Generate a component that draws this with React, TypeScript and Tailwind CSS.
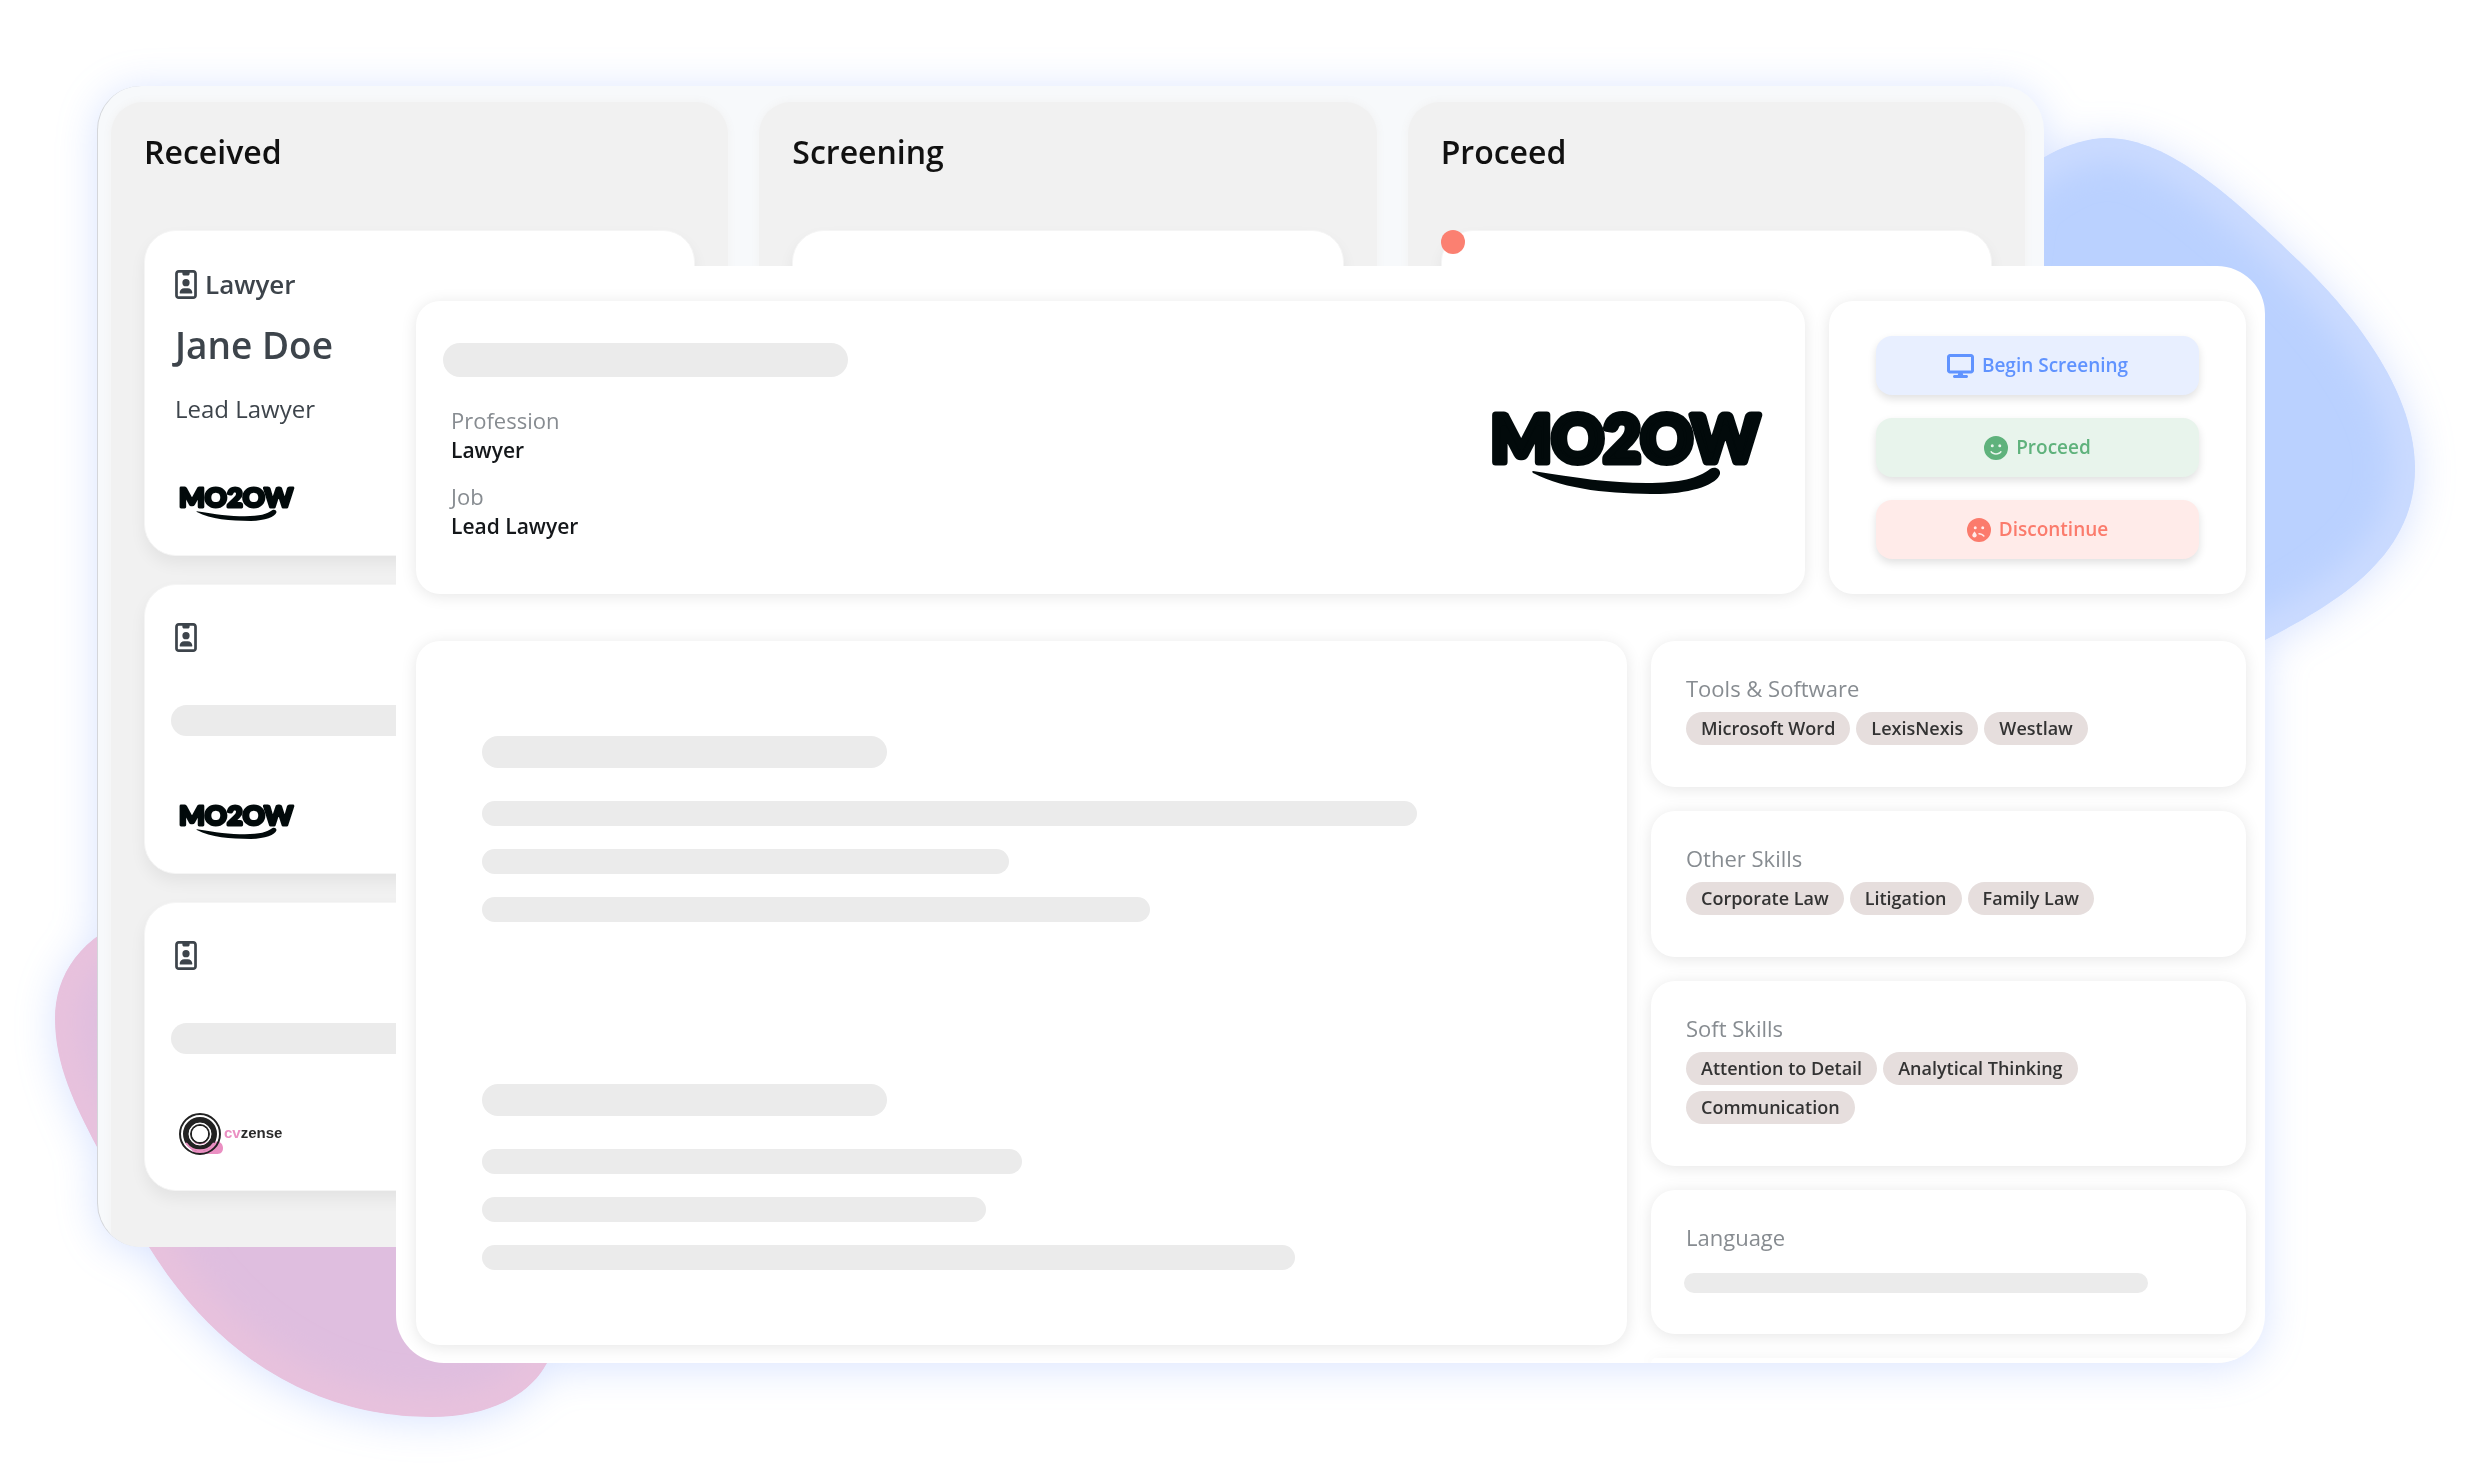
import React from "react";
import { FaDisplay, FaFaceSadTear, FaFaceSmile, FaRegIdBadge } from "react-icons/fa6";

interface SkillGroup {
  title: string;
  skills: string[];
}

const skillGroups: SkillGroup[] = [
  { title: "Tools & Software", skills: ["Microsoft Word", "LexisNexis", "Westlaw"] },
  { title: "Other Skills", skills: ["Corporate Law", "Litigation", "Family Law"] },
  { title: "Soft Skills", skills: ["Attention to Detail", "Analytical Thinking", "Communication"] },
];

const BLUE_BLOB =
  "M2000 190 C2030 162 2070 138 2107 138 C2170 138 2235 200 2300 262 C2360 320 2415 395 2415 469 C2415 560 2330 606 2265 640 L2100 700 L1960 500 Z";
const PINK_BLOB =
  "M140 915 C80 935 55 975 55 1019 C55 1065 75 1105 97 1147 C115 1184 130 1215 149 1247 C230 1378 340 1417 431 1417 C490 1417 530 1395 547 1363 L640 1200 L400 1000 Z";

const Blobs: React.FC = () => (
  <svg
    className="absolute inset-0 h-full w-full"
    viewBox="0 0 2469 1481"
    preserveAspectRatio="none"
    aria-hidden="true"
  >
    <defs>
      <filter id="soft" x="-20%" y="-20%" width="140%" height="140%">
        <feGaussianBlur stdDeviation="18" />
      </filter>
      <clipPath id="blue-clip">
        <path d={BLUE_BLOB} />
      </clipPath>
      <clipPath id="pink-clip">
        <path d={PINK_BLOB} />
      </clipPath>
    </defs>
    <g clipPath="url(#blue-clip)">
      <path d={BLUE_BLOB} fill="#bad1ff" />
      <path d={BLUE_BLOB} fill="none" stroke="#d0deff" strokeWidth="36" filter="url(#soft)" />
    </g>
    <g clipPath="url(#pink-clip)">
      <path d={PINK_BLOB} fill="#dfbedf" />
      <path d={PINK_BLOB} fill="none" stroke="#ebc3dc" strokeWidth="36" filter="url(#soft)" />
    </g>
  </svg>
);

const Mo2owLogo: React.FC<{ className: string }> = ({ className }) => (
  <svg className={`overflow-visible ${className}`} viewBox="0 0 268 87" role="img" aria-label="MO2OW">
    <text
      x="134"
      y="55"
      textAnchor="middle"
      fontFamily="Lato, sans-serif"
      fontWeight="900"
      fontSize="64"
      fill="#020a0b"
      stroke="#020a0b"
      strokeWidth="7"
      strokeLinejoin="round"
    >
      MO2OW
    </text>
    <path
      d="M42 64 C85 71 120 76 155 76 C190 76 207 71 219 62 C224 59 230 62 229 67 C226 77 203 86 169 87 C120 87 75 83 42 66 C41 65 41 64 42 64 Z"
      fill="#020a0b"
    />
  </svg>
);

const CvzenseLogo: React.FC = () => (
  <svg className="h-11 w-[104px]" viewBox="0 0 104 44" role="img" aria-label="cvzense">
    <path d="M6 30 H34 C41 28 44 32 44 36 C44 41 41 42 37 42 H16 Z" fill="#ea8fc2" />
    <g fill="none" stroke="#222222">
      <circle cx="21" cy="22" r="20" strokeWidth="2" />
      <circle cx="21" cy="22" r="14" strokeWidth="6" />
      <circle cx="21" cy="22" r="9" strokeWidth="2" />
    </g>
    <circle cx="21" cy="22" r="11" fill="none" stroke="#ffffff" strokeWidth="1" />
    <circle cx="21" cy="22" r="8" fill="#ffffff" />
    <path d="M7 31 A17 17 0 0 0 35 31" fill="none" stroke="#ea8fc2" strokeWidth="2" />
    <text x="45" y="26" fontFamily="Liberation Sans, sans-serif" fontWeight="700" fontSize="15" fill="#2b2b2b">
      <tspan fill="#ea8fc2">cv</tspan>zense
    </text>
  </svg>
);

const Bar: React.FC<{ className: string }> = ({ className }) => (
  <div className={`rounded-full bg-[#ebebeb] ${className}`} />
);

const Column: React.FC<{ title: string; children: React.ReactNode }> = ({ title, children }) => (
  <section className="flex flex-1 flex-col rounded-t-4xl bg-[#f1f1f1] px-[33px] pt-[30px] shadow-[0_0_10px_#f1f1f1]">
    <h2 className="mb-[58px] text-[32px] leading-10 font-semibold text-[#111111]">{title}</h2>
    <div className="flex flex-col gap-7">{children}</div>
  </section>
);

const Candidate: React.FC<{ children?: React.ReactNode }> = ({ children }) => (
  <article className="min-h-[288px] rounded-4xl border border-[#f5f5f5] bg-white px-[30px] pt-[38px] pb-[34px] text-[#3d444b] shadow-[0_8px_16px_rgba(0,0,0,0.06)]">
    {children}
  </article>
);

const Card: React.FC<{ className: string; children?: React.ReactNode }> = ({ className, children }) => (
  <section className={`rounded-3xl bg-white shadow-[0_2px_16px_rgba(0,0,0,0.1)] ${className}`}>{children}</section>
);

const Board: React.FC = () => (
  <div className="relative col-start-2 col-end-4 row-start-1 flex h-[1161px] gap-[31px] self-start overflow-hidden rounded-[44px] border-l border-[#d4d6da] bg-[#f7f9fb] pt-4 pr-[19px] pl-[13px]">
    <Column title="Received">
      <Candidate>
        <div className="flex items-center gap-2 text-[26px] leading-[30px] font-semibold">
          <FaRegIdBadge className="h-[29px] w-[22px]" />
          Lawyer
        </div>
        <h3 className="mt-[26px] text-[37px] leading-10 font-semibold">Jane Doe</h3>
        <p className="mt-7 text-2xl leading-8">Lead Lawyer</p>
        <Mo2owLogo className="mt-[59px] ml-1 h-[37px] w-[114px]" />
      </Candidate>
      <Candidate>
        <FaRegIdBadge className="h-[29px] w-[22px]" />
        <Bar className="mt-[53px] -ml-1 h-[31px]" />
        <Mo2owLogo className="mt-[66px] ml-1 h-[37px] w-[114px]" />
      </Candidate>
      <Candidate>
        <FaRegIdBadge className="h-[29px] w-[22px]" />
        <Bar className="mt-[53px] -ml-1 h-[31px]" />
        <div className="mt-[58px] ml-1">
          <CvzenseLogo />
        </div>
      </Candidate>
    </Column>
    <Column title="Screening">
      <Candidate />
    </Column>
    <Column title="Proceed">
      <div className="relative">
        <Candidate />
        <span className="absolute top-0 left-0 size-6 rounded-full bg-[#fb8071]" />
      </div>
    </Column>
  </div>
);

const Field: React.FC<{ label: string; value: string }> = ({ label, value }) => (
  <div className="leading-[30px]">
    <dt className="text-[22px] text-[#878c91]">{label}</dt>
    <dd className="text-[21px] font-semibold text-[#14171a]">{value}</dd>
  </div>
);

const actionClass =
  "flex h-[59px] w-full items-center justify-center gap-2 rounded-2xl text-[19px] font-semibold shadow-[0_4px_8px_rgba(0,0,0,0.12)]";

const Profile: React.FC = () => (
  <div className="relative col-start-3 col-end-5 row-start-1 mt-[180px] self-start overflow-hidden rounded-[48px] bg-white pt-[35px] pr-[19px] pl-5">
    <div className="flex gap-6">
      <Card className="flex min-h-[293px] flex-1 items-start justify-between pt-[42px] pr-[46px] pl-[27px]">
        <div>
          <Bar className="h-[34px] w-[405px]" />
          <dl className="mt-7 ml-2 flex flex-col gap-4">
            <Field label="Profession" value="Lawyer" />
            <Field label="Job" value="Lead Lawyer" />
          </dl>
        </div>
        <Mo2owLogo className="mt-16 h-[87px] w-[268px]" />
      </Card>
      <Card className="flex w-[417px] flex-col gap-[23px] px-[47px] py-[35px]">
        <button className={`${actionClass} bg-[#e8efff] text-[#6093ff]`}>
          <FaDisplay className="h-6 w-[27px]" />
          Begin Screening
        </button>
        <button className={`${actionClass} bg-[#e8f4ec] text-[#5fb27c]`}>
          <FaFaceSmile className="size-6" />
          Proceed
        </button>
        <button className={`${actionClass} bg-[#ffebe9] text-[#fb7b6c]`}>
          <FaFaceSadTear className="size-6" />
          Discontinue
        </button>
      </Card>
    </div>

    <div className="mt-[47px] flex gap-6">
      <Card className="mb-[18px] flex-1 px-[66px] pt-[95px] pb-[75px]">
        <Bar className="h-8 w-[405px]" />
        <div className="mt-[33px] flex flex-col gap-[23px]">
          <Bar className="h-[25px] w-[935px]" />
          <Bar className="h-[25px] w-[527px]" />
          <Bar className="h-[25px] w-[668px]" />
        </div>
        <Bar className="mt-[162px] h-8 w-[405px]" />
        <div className="mt-[33px] flex flex-col gap-[23px]">
          <Bar className="h-[25px] w-[540px]" />
          <Bar className="h-[25px] w-[504px]" />
          <Bar className="h-[25px] w-[813px]" />
        </div>
      </Card>
      <div className="flex w-[595px] flex-col gap-6">
        {skillGroups.map((group) => (
          <Card key={group.title} className="px-[35px] pt-8 pb-[42px]">
            <h3 className="text-[22px] leading-[30px] text-[#878c91]">{group.title}</h3>
            <ul className="mt-[9px] flex max-w-[420px] flex-wrap gap-[6px]">
              {group.skills.map((skill) => (
                <li
                  key={skill}
                  className="rounded-full bg-[#e6dedd] px-[15px] text-[18px] leading-[33px] font-semibold text-[#333333]"
                >
                  {skill}
                </li>
              ))}
            </ul>
          </Card>
        ))}
        <Card className="px-[35px] pt-8 pb-[41px]">
          <h3 className="text-[22px] leading-[30px] text-[#878c91]">Language</h3>
          <Bar className="mt-[21px] -ml-[2px] h-5 w-[464px]" />
        </Card>
        <div className="h-[5px] rounded-t-3xl bg-white shadow-[0_2px_16px_rgba(0,0,0,0.1)]" />
      </div>
    </div>
  </div>
);

export default function App() {
  return (
    <main className="min-h-screen bg-white font-['Open_Sans','Noto_Sans',sans-serif]">
      <div className="relative grid min-h-screen grid-cols-[97fr_299fr_1648fr_221fr_204fr] content-start pt-[86px] pb-[118px] drop-shadow-[0_4px_20px_rgba(90,140,255,0.24)]">
        <Blobs />
        <Board />
        <Profile />
      </div>
    </main>
  );
}
